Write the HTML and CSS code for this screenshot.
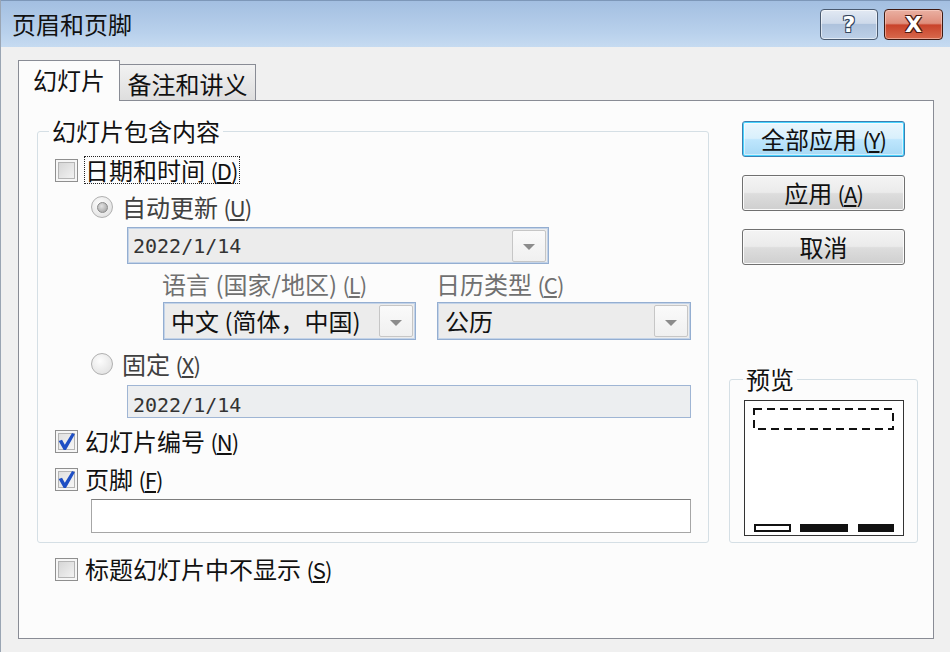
FILE: index.html
```html
<!DOCTYPE html>
<html lang="zh-CN">
<head>
    <meta charset="UTF-8">
    <meta name="viewport" content="width=device-width, initial-scale=1.0">
    <title>页眉和页脚</title>
    <link rel="stylesheet" href="styles.css">
</head>
<body>
    <div class="window">
        <div class="titlebar">
            <span class="title">页眉和页脚</span>
            <div class="caption-buttons">
                <button class="cap help">?</button>
                <button class="cap close">X</button>
            </div>
        </div>

        <div class="tabs">
            <div class="tab active">幻灯片</div>
            <div class="tab">备注和讲义</div>
        </div>

        <div class="panel">
            <div class="left">
                <fieldset class="group">
                    <legend>幻灯片包含内容</legend>
                    <div class="group-body">
                        <label class="check row-date">
                            <span class="box"></span>
                            <span class="focus">日期和时间 <span class="key">(<u>D</u>)</span></span>
                        </label>

                        <label class="radio row-auto muted">
                            <span class="dot selected"><span class="pip"></span></span>
                            <span>自动更新 <span class="key">(<u>U</u>)</span></span>
                        </label>

                        <div class="combo combo-date">
                            <span class="combo-text mono">2022/1/14</span>
                            <span class="arrow"><span class="tri"></span></span>
                        </div>

                        <div class="lang-grid">
                            <span class="sub-label">语言 (国家/地区) <span class="key">(<u>L</u>)</span></span>
                            <span class="sub-label">日历类型 <span class="key">(<u>C</u>)</span></span>
                            <div class="combo">
                                <span class="combo-text">中文 (简体，中国)</span>
                                <span class="arrow"><span class="tri"></span></span>
                            </div>
                            <div class="combo">
                                <span class="combo-text">公历</span>
                                <span class="arrow"><span class="tri"></span></span>
                            </div>
                        </div>

                        <label class="radio row-fixed muted">
                            <span class="dot"></span>
                            <span>固定 <span class="key">(<u>X</u>)</span></span>
                        </label>

                        <div class="textbox fixed-box"><span class="mono">2022/1/14</span></div>

                        <label class="check row-num">
                            <span class="box checked">
                                <svg width="19" height="19" viewBox="0 0 17 17"><path d="M1.5 8 L4.5 7 L7 11.5 L13.5 1 L16 2 L8 16 L6 16 Z" fill="#1f4fc4"/></svg>
                            </span>
                            <span>幻灯片编号 <span class="key">(<u>N</u>)</span></span>
                        </label>

                        <label class="check row-footer">
                            <span class="box checked">
                                <svg width="19" height="19" viewBox="0 0 17 17"><path d="M1.5 8 L4.5 7 L7 11.5 L13.5 1 L16 2 L8 16 L6 16 Z" fill="#1f4fc4"/></svg>
                            </span>
                            <span>页脚 <span class="key">(<u>F</u>)</span></span>
                        </label>

                        <div class="textbox footer-box"></div>
                    </div>
                </fieldset>

                <label class="check row-notitle">
                    <span class="box"></span>
                    <span>标题幻灯片中不显示 <span class="key">(<u>S</u>)</span></span>
                </label>
            </div>

            <div class="right">
                <button class="btn default">全部应用 <span class="key">(<u>Y</u>)</span></button>
                <button class="btn">应用 <span class="key">(<u>A</u>)</span></button>
                <button class="btn">取消</button>

                <fieldset class="preview">
                    <legend>预览</legend>
                    <div class="preview-box">
                        <svg width="160" height="136" viewBox="0 0 160 136">
                            <rect x="0.5" y="0.5" width="159" height="135" fill="#fff" stroke="#333" stroke-width="1"/>
                            <rect x="10" y="9" width="139" height="20" fill="none" stroke="#111" stroke-width="2" stroke-dasharray="8 5"/>
                            <rect x="11" y="125" width="35" height="6" fill="#fff" stroke="#111" stroke-width="2"/>
                            <rect x="56" y="124" width="48" height="8" fill="#111"/>
                            <rect x="114" y="124" width="36" height="8" fill="#111"/>
                        </svg>
                    </div>
                </fieldset>
            </div>
        </div>
    </div>
</body>
</html>
```

FILE: styles.css
```css
* {
    box-sizing: border-box;
    margin: 0;
    padding: 0;
}

body {
    width: 950px;
    height: 652px;
    overflow: hidden;
    background-color: #f0f0f0;
    font-family: "Noto Sans CJK SC", "Noto Sans", sans-serif;
    font-size: 24px;
    color: #111;
}

.window {
    height: 652px;
    border-left: 1px solid #9aa5b3;
}

/* barra de título */
.titlebar {
    height: 47px;
    display: flex;
    align-items: center;
    justify-content: space-between;
    padding: 0 7px 0 11px;
    background: linear-gradient(#a3bfe1, #b9d1ec 70%, #c6dbf1);
    border-top: 1px solid #7d97b8;
}

.title {
    font-size: 24px;
    line-height: 30px;
    color: #111;
}

.caption-buttons {
    display: flex;
    gap: 6px;
}

.cap {
    width: 58px;
    height: 31px;
    border-radius: 4px;
    font-family: "DejaVu Sans", sans-serif;
    font-weight: bold;
    font-size: 22px;
    line-height: 27px;
    color: #fff;
    cursor: pointer;
}

.help {
    border: 1px solid #4a5a70;
    background: linear-gradient(#e2e9f3 0%, #cdd9ea 46%, #aec2dc 50%, #bdd0e8 100%);
    box-shadow: inset 0 0 0 1px rgba(255, 255, 255, 0.55);
    text-shadow: -1px -1px 0 #33455e, 1px -1px 0 #33455e, -1px 1px 0 #33455e, 1px 1px 0 #33455e;
}

.close {
    width: 59px;
    border: 1px solid #3e1a12;
    background: linear-gradient(#eab0a2 0%, #df8d7b 46%, #c9432b 52%, #d8694c 100%);
    box-shadow: inset 0 0 0 1px rgba(255, 220, 210, 0.5);
    text-shadow: -1px -1px 0 #4a1a10, 1px -1px 0 #4a1a10, -1px 1px 0 #4a1a10, 1px 1px 0 #4a1a10;
}

/* abas */
.tabs {
    display: flex;
    align-items: flex-end;
    margin: 13px 0 0 17px;
    height: 40px;
}

.tab {
    height: 36px;
    width: 137px;
    border: 1px solid #898c95;
    border-bottom: none;
    background: linear-gradient(#f2f2f2, #dedede);
    text-align: center;
    line-height: 38px;
    margin-left: -1px;
}

.tab.active {
    position: relative;
    z-index: 1;
    width: 102px;
    height: 41px;
    margin-left: 0;
    margin-bottom: -1px;
    background: #fcfcfc;
    line-height: 38px;
}

/* painel */
.panel {
    display: flex;
    gap: 20px;
    width: 916px;
    height: 539px;
    margin-left: 17px;
    padding: 18px 0 0 18px;
    background-color: #fcfcfc;
    border: 1px solid #898c95;
}

.left {
    width: 672px;
    display: flex;
    flex-direction: column;
}

.right {
    width: 189px;
    display: flex;
    flex-direction: column;
}

fieldset {
    min-width: 0;
    border: 1px solid #d5dfe5;
    border-radius: 3px;
}

legend {
    line-height: 24px;
    padding: 0 3px;
}

.group legend {
    margin-left: 11px;
}

.group-body {
    display: flex;
    flex-direction: column;
    padding: 12px 0 9px 17px;
}

.key {
    font-size: 22px;
    letter-spacing: -1px;
}

.key u {
    text-underline-offset: 2px;
}

/* caixas de seleção e rádios */
.check,
.radio {
    display: flex;
    align-items: center;
    height: 30px;
    line-height: 30px;
    white-space: nowrap;
}

.box {
    width: 23px;
    height: 23px;
    margin-right: 7px;
    flex-shrink: 0;
    display: flex;
    align-items: center;
    justify-content: center;
    border: 1px solid #8f8f8f;
    background: linear-gradient(135deg, #d0d0d0, #f8f8f8);
    box-shadow: inset 0 0 0 2px #f6f6f6, inset 0 0 0 3px #b4b4b4;
}

.box.checked {
    background: linear-gradient(135deg, #dcdcdc, #fafafa);
}

.focus {
    border: 1px dotted #222;
    line-height: 26px;
    padding: 0 2px 0 0;
    margin-left: -1px;
}

.muted {
    color: #404040;
}

.row-auto {
    margin: 7px 0 0 36px;
}

.dot {
    width: 22px;
    height: 22px;
    margin-right: 9px;
    flex-shrink: 0;
    border-radius: 50%;
    border: 1px solid #b0b0b0;
    background: radial-gradient(circle at 40% 35%, #fdfdfd, #dcdcdc);
    display: flex;
    align-items: center;
    justify-content: center;
}

.pip {
    width: 11px;
    height: 11px;
    border-radius: 50%;
    border: 1px solid #8a8a8a;
    background: radial-gradient(circle at 40% 35%, #e2e2e2, #9a9a9a);
}

/* listas suspensas */
.combo {
    height: 38px;
    display: flex;
    align-items: center;
    padding: 2px 2px 2px 7px;
    border: 1px solid #94aed1;
    box-shadow: inset 0 0 0 1px #c3d3e8;
    background-color: #ececec;
}

.combo-date {
    width: 422px;
    height: 37px;
    margin: 5px 0 0 72px;
    padding-left: 5px;
}

.combo-text {
    flex: 1;
    white-space: nowrap;
    line-height: 30px;
}

.mono {
    font-family: "DejaVu Sans Mono", monospace;
    font-size: 20px;
    color: #333;
}

.arrow {
    width: 34px;
    height: 32px;
    border: 1px solid #c6c6c6;
    border-radius: 2px;
    background: linear-gradient(#fafafa, #f0f0f0);
    display: flex;
    align-items: center;
    justify-content: center;
}

.tri {
    width: 0;
    height: 0;
    border-left: 6px solid transparent;
    border-right: 6px solid transparent;
    border-top: 6px solid #8c8c8c;
    margin-top: 3px;
}

.lang-grid {
    display: grid;
    grid-template-columns: 253px 254px;
    grid-template-rows: 24px 38px;
    column-gap: 21px;
    row-gap: 6px;
    margin: 8px 0 0 108px;
}

.sub-label {
    line-height: 24px;
    color: #707070;
    white-space: nowrap;
    margin-left: -1px;
}

.row-fixed {
    margin: 9px 0 0 36px;
}

.textbox {
    height: 33px;
    line-height: 31px;
    padding-left: 5px;
}

.fixed-box {
    width: 564px;
    margin: 6px 0 0 72px;
    border: 1px solid #9fb5d4;
    background-color: #eceef0;
}

.row-num {
    margin-top: 8px;
}

.row-footer {
    margin-top: 8px;
}

.footer-box {
    width: 600px;
    height: 34px;
    margin: 5px 0 0 36px;
    border: 1px solid #a6a6a6;
    border-top-color: #7d7d7d;
    background-color: #fff;
}

.row-notitle {
    margin: 11px 0 0 18px;
}

/* botões */
.btn {
    width: 163px;
    height: 36px;
    margin: 18px 0 0 13px;
    border: 1px solid #707070;
    border-radius: 3px;
    background: linear-gradient(#f4f4f4 0%, #ebebeb 48%, #dddddd 52%, #cfcfcf 100%);
    box-shadow: inset 0 0 0 1px #fbfbfb;
    font-family: "Noto Sans CJK SC", sans-serif;
    font-size: 24px;
    line-height: 30px;
    color: #111;
    white-space: nowrap;
    cursor: pointer;
}

.btn.default {
    margin-top: 2px;
    border-color: #3c7fb1;
    background: linear-gradient(#eaf6fd 0%, #d9f0fc 48%, #bee6fd 52%, #a7d9f5 100%);
    box-shadow: inset 0 0 0 1px #48d4ff, inset 0 0 0 2px rgba(255, 255, 255, 0.5);
}

.preview {
    width: 189px;
    margin-top: 102px;
}

.preview legend {
    margin-left: 13px;
}

.preview-box {
    width: 160px;
    height: 136px;
    margin: 9px 0 6px 14px;
}

.preview-box svg {
    display: block;
}
```
